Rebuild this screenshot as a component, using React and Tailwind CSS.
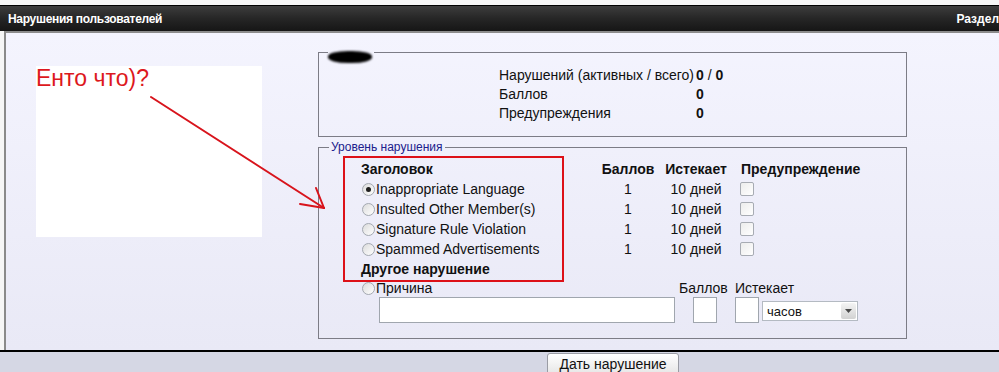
import React from "react";

const rules = [
  { title: "Inappropriate Language", checked: true },
  { title: "Insulted Other Member(s)", checked: false },
  { title: "Signature Rule Violation", checked: false },
  { title: "Spammed Advertisements", checked: false },
];

function Radio({ checked }) {
  return (
    <span className="ml-[1px] flex h-[13px] w-[13px] shrink-0 items-center justify-center rounded-full border border-[#a3a8b0] bg-gradient-to-br from-[#dcdcdc] to-white">
      {checked && <span className="h-[5px] w-[5px] rounded-full bg-[#1e1e1e]" />}
    </span>
  );
}

function Checkbox() {
  return <span className="block h-[14px] w-[14px] rounded-[2px] border border-[#a7abb3] bg-gradient-to-br from-[#ececec] to-white" />;
}

export default function App() {
  return (
    <div className="relative h-[372px] w-[999px] overflow-hidden bg-[#f6f6f6] font-['Liberation_Sans',Arial,sans-serif] text-[14px] text-[#111]">
      <div className="h-[5px]" />

      {/* Header */}
      <div className="flex h-[26px] items-center border-t border-black bg-gradient-to-b from-[#3d3d3d] via-[#262626] to-[#161616] pl-[8px] text-white">
        <span className="text-[12px] font-bold tracking-[-0.3px]">Нарушения пользователей</span>
        <span className="ml-auto whitespace-nowrap text-[12px] font-bold">Раздел</span>
      </div>
      <div className="ml-[4px] h-[2px] bg-[#8c8c8c]" />

      {/* Content */}
      <div className="ml-[4px] flex h-[317px] border-l-2 border-[#8a8a8a] bg-gradient-to-b from-[#f4f4fe] to-[#e9e9f6]">
        <div className="ml-[30px] mt-[33px] h-[171px] w-[226px] shrink-0 bg-white pt-[1px]">
          <span className="text-[23px] leading-none text-[#dd1820]">Енто что)?</span>
        </div>

        <div className="ml-[56px] w-[589px] shrink-0 pt-[17px]">
          <fieldset className="box-border h-[87px] border border-[#7c7c86]">
            <legend className="relative ml-[9px] h-[4px] w-[46px]">
              <span className="absolute left-0 top-[1px] h-[12px] w-[44px] rounded-[45%] bg-black blur-[1px]" />
            </legend>
            <div className="grid grid-cols-[197px_auto] pl-[180px] pt-[12px] leading-[19px]">
              <span>Нарушений (активных / всего)</span>
              <span>
                <b>0</b> / <b>0</b>
              </span>
              <span>Баллов</span>
              <b>0</b>
              <span>Предупреждения</span>
              <b>0</b>
            </div>
          </fieldset>

          <fieldset className="mt-[3px] box-border h-[199px] border border-[#7c7c86]">
            <legend className="ml-[10px] px-[2px] text-[12px] leading-[14px] text-[#20208c]">Уровень нарушения</legend>
            <div className="pl-[42px] pt-[5px]">
              <div className="grid grid-cols-[235px_64px_72px_auto] items-center font-bold leading-[20px]">
                <span>Заголовок</span>
                <span className="text-center">Баллов</span>
                <span className="text-center">Истекает</span>
                <span className="pl-[9px]">Предупреждение</span>
              </div>
              {rules.map((rule) => (
                <div key={rule.title} className="grid h-[20px] grid-cols-[235px_64px_72px_auto] items-center leading-[20px]">
                  <span className="flex items-center">
                    <Radio checked={rule.checked} />
                    <span className="ml-[1px]">{rule.title}</span>
                  </span>
                  <span className="text-center">1</span>
                  <span className="text-center">10 дней</span>
                  <span className="pl-[8px]">
                    <Checkbox />
                  </span>
                </div>
              ))}
              <div className="font-bold leading-[20px]">Другое нарушение</div>
              <div className="flex h-[18px] items-center">
                <span className="flex w-[318px] items-center">
                  <Radio checked={false} />
                  <span className="ml-[1px]">Причина</span>
                </span>
                <span className="w-[56px]">Баллов</span>
                <span>Истекает</span>
              </div>
            </div>
            <div className="flex items-end pl-[60px]">
              <div className="h-[26px] w-[296px] border border-[#a0a6ae] bg-white" />
              <div className="ml-[18px] h-[26px] w-[24px] border border-[#a0a6ae] bg-white" />
              <div className="ml-[18px] h-[26px] w-[24px] border border-[#a0a6ae] bg-white" />
              <div className="mb-[2px] ml-[3px] flex h-[20px] w-[96px] items-center border border-[#b4bac2] bg-white">
                <span className="flex-1 pl-[4px] text-[13px] leading-none">часов</span>
                <span className="mr-[1px] flex h-[16px] w-[15px] items-center justify-center rounded-[2px] bg-gradient-to-b from-[#f4f4f4] to-[#d2d2d2]">
                  <svg width="7" height="4" viewBox="0 0 7 4">
                    <path d="M0 0h7L3.5 4z" fill="#4a4a4a" />
                  </svg>
                </span>
              </div>
            </div>
          </fieldset>
        </div>
      </div>

      {/* Footer */}
      <div className="h-[2px] bg-black" />
      <div className="h-[20px] bg-[#d5d7e4] pl-[547px] pt-[1px]">
        <button className="h-[22px] w-[132px] rounded-[3px] border border-[#9a9ca4] bg-gradient-to-b from-white to-[#e6e6e6] text-[14px] leading-[18px] text-[#111]">
          Дать нарушение
        </button>
      </div>

      {/* Annotation overlays */}
      <div className="pointer-events-none absolute left-[343px] top-[156px] h-[126px] w-[221px] border-2 border-[#dd1118]" />
      <svg className="pointer-events-none absolute left-0 top-0" width="999" height="372" viewBox="0 0 999 372">
        <g stroke="#d8141c" strokeWidth="2" strokeLinecap="round" fill="none">
          <path d="M151 97L324 208" />
          <path d="M316 188L324 208" />
          <path d="M300 204L324 208" />
        </g>
      </svg>
    </div>
  );
}
